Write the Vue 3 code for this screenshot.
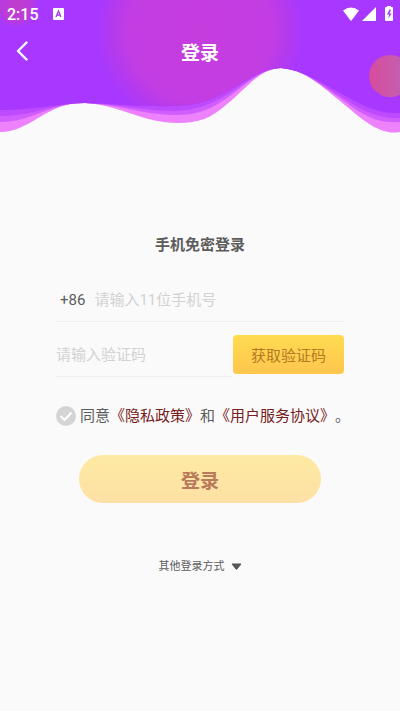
<script setup>
import { ref } from 'vue'

const phone = ref('')
const code = ref('')
const agreed = ref(false)
</script>

<template>
  <div class="page">
    <header class="header">
      <svg class="waves" viewBox="0 0 400 134" preserveAspectRatio="none" aria-hidden="true">
        <defs>
          <clipPath id="base-clip">
            <path d="M0 0H400V113C376 114 360 104 340 93C318 81 302 70 281 68C262 68 250 79 230 90C207 103 194 105 175 106C145 107 118 104 85 103C55 104 35 110 0 110Z" />
          </clipPath>
          <radialGradient id="glow">
            <stop offset="0" stop-color="#c63dde" />
            <stop offset="0.7" stop-color="#c23de3" />
            <stop offset="0.84" stop-color="#b53aee" />
            <stop offset="1" stop-color="#a838ff" />
          </radialGradient>
          <linearGradient id="ball">
            <stop offset="0" stop-color="#d94b9d" />
            <stop offset="1" stop-color="#bd65b4" />
          </linearGradient>
          <radialGradient id="corner">
            <stop offset="0" stop-color="#c23dcb" />
            <stop offset="0.7" stop-color="#b93bdc" />
            <stop offset="1" stop-color="#a838ff" />
          </radialGradient>
        </defs>
        <path fill="#ed82fc" d="M0 0H400V132C379 136 361 118 340 101C318 83 303 69 281 68C259 69 247 88 226 105C211 118 199 123 178 123C143 123 120 105 85 103C48 101 31 132 0 132Z" />
        <path fill="#d15dff" d="M0 0H400V122C376 124 359 113 340 98C318 83 302 69 281 68C260 69 247 84 227 98C207 112 194 115 174 115C144 115 118 104 85 103C52 102 33 122 0 122Z" />
        <path fill="#bd4aff" d="M0 0H400V118C376 119 360 109 340 96C318 82 302 69 281 68C261 69 248 82 228 94C207 107 194 110 174 111C145 111 118 104 85 103C54 103 34 116 0 116Z" />
        <g clip-path="url(#base-clip)">
          <path fill="#a838ff" d="M0 0H400V134H0Z" />
          <circle cx="200" cy="30" r="104" fill="url(#glow)" />
          <circle cx="16" cy="6" r="22" fill="url(#corner)" />
        </g>
        <circle cx="390" cy="76" r="21" fill="url(#ball)" />
      </svg>

      <div class="status">
        <span class="time">2:15</span>
        <svg class="badge" width="11" height="12" viewBox="0 0 11 12" aria-hidden="true">
          <rect width="11" height="12" rx="1" fill="#fff" />
          <path d="M3 9L5.500 3L8 9M4 7H7" fill="none" stroke="#a03bf0" stroke-width="1.300" />
        </svg>
        <svg class="signals" width="52" height="16" viewBox="0 0 52 16" aria-hidden="true">
          <g fill="#fff">
            <path d="M0 4.500Q8 -1.500 16 4.500L8.500 14.500Q8 15 7.500 14.500Z" />
            <path d="M33 1V15H19Z" />
            <path d="M44 0H48V1H49Q50 1 50 2V14Q50 15 49 15H43Q42 15 42 14V2Q42 1 43 1H44Z" />
          </g>
          <path d="M46.500 3.500L44 8.500H46L45.500 12.500L48.500 7.500H46.700L48 3.500Z" fill="#a838ff" />
        </svg>
      </div>

      <nav class="bar">
        <button class="back" type="button" aria-label="返回">
          <svg width="12" height="20" viewBox="0 0 12 20" aria-hidden="true">
            <path d="M10.500 1.500L2 10L10.500 18.500" fill="none" stroke="#fff" stroke-width="2.400" stroke-linecap="round" stroke-linejoin="round" />
          </svg>
        </button>
        <h1 class="title">登录</h1>
      </nav>
    </header>

    <form class="form" @submit.prevent>
      <h2 class="heading">手机免密登录</h2>

      <div class="field">
        <label class="prefix" for="phone">+86</label>
        <input id="phone" v-model="phone" class="input" type="tel" maxlength="11" placeholder="请输入11位手机号" />
      </div>

      <div class="code-row">
        <div class="field code-field">
          <input v-model="code" class="input" type="text" inputmode="numeric" aria-label="验证码" placeholder="请输入验证码" />
        </div>
        <button class="send" type="button">获取验证码</button>
      </div>

      <div class="terms">
        <span class="tick">
          <input id="agree" v-model="agreed" class="check" type="checkbox" />
          <svg class="mark" viewBox="0 0 20 20" aria-hidden="true">
            <path d="M4.500 10L8.500 14L15.500 6.500" fill="none" stroke="#fff" stroke-width="2" />
          </svg>
        </span>
        <p class="agreement">
          <label for="agree">同意</label><a href="#privacy">《隐私政策》</a>和<a href="#service">《用户服务协议》</a>。
        </p>
      </div>

      <button class="submit" type="submit">登录</button>

      <button class="more" type="button">
        其他登录方式
        <svg width="11" height="8" viewBox="0 0 11 8" aria-hidden="true">
          <path d="M1 1H10L5.500 6.500Z" fill="#555" stroke="#555" stroke-linejoin="round" />
        </svg>
      </button>
    </form>
  </div>
</template>

<style>
body {
  margin: 0;
  background: #fafafa;
}
</style>

<style scoped>
.page {
  min-height: 100vh;
  overflow: hidden;
  background: #fafafa;
  color: #5c5c5c;
  font-family: Roboto, "Noto Sans CJK SC", sans-serif;
  font-size: 15px;
}

button,
input {
  font-family: inherit;
  margin: 0;
  padding: 0;
  border: 0;
  background: none;
}

.header {
  position: relative;
  height: 134px;
  color: #fff;
}

.waves {
  position: absolute;
  inset: 0;
  width: 100%;
  height: 100%;
}

.status {
  position: relative;
  display: flex;
  align-items: center;
  height: 28px;
  padding: 0 5px 0 7px;
}

.time {
  font-size: 16px;
  font-weight: 500;
}

.badge {
  margin-left: 14px;
}

.signals {
  margin-left: auto;
}

.bar {
  position: relative;
  display: grid;
  grid-template-columns: 44px 1fr 44px;
  align-items: center;
  height: 46px;
}

.back {
  display: flex;
  align-items: center;
  justify-content: center;
  height: 44px;
}

.title {
  margin: 0;
  text-align: center;
  font-size: 19px;
  font-weight: 700;
}

.form {
  display: flex;
  flex-direction: column;
  padding: 99px 56px 0;
}

.heading {
  margin: 0 0 31px;
  line-height: 24px;
  text-align: center;
  font-size: 15px;
  font-weight: 700;
}

.field {
  display: flex;
  align-items: center;
  box-sizing: border-box;
  height: 34px;
  padding-bottom: 10px;
  border-bottom: 1px solid #eee;
}

.prefix {
  padding: 0 9px 0 4px;
}

.input {
  flex: 1;
  min-width: 0;
  height: 24px;
  outline: none;
  color: #5c5c5c;
  font-size: 15px;
}

.input::placeholder {
  color: #d2d2d2;
  opacity: 1;
}

.code-row {
  display: flex;
  align-items: flex-start;
  margin-top: 13px;
}

.code-field {
  flex: 1;
  min-width: 0;
  height: 42px;
  padding-top: 8px;
}

.send {
  width: 111px;
  height: 39px;
  border-radius: 4px;
  background: linear-gradient(#ffdb50, #fec64e);
  color: #b47a23;
  font-size: 15px;
}

.terms {
  display: flex;
  align-items: center;
  gap: 4px;
  margin-top: 27px;
}

.tick {
  position: relative;
  display: flex;
  flex: none;
}

.check {
  appearance: none;
  width: 20px;
  height: 20px;
  border-radius: 50%;
  background: #d4d4d4;
}

.check:checked {
  background: #fec64e;
}

.mark {
  position: absolute;
  inset: 0;
  pointer-events: none;
}

.agreement {
  margin: 0;
  line-height: 24px;
  white-space: nowrap;
  text-spacing-trim: space-all;
}

.agreement a {
  color: #762020;
  text-decoration: none;
}

.submit {
  height: 48px;
  margin: 27px 23px 0;
  border-radius: 24px;
  background: linear-gradient(#fdeaa2, #fde0a5);
  color: #b9795b;
  font-size: 19px;
  font-weight: 700;
}

.more {
  display: flex;
  align-items: center;
  align-self: center;
  gap: 6px;
  margin-top: 54px;
  line-height: 20px;
  color: #5c5c5c;
  font-size: 11px;
}
</style>
